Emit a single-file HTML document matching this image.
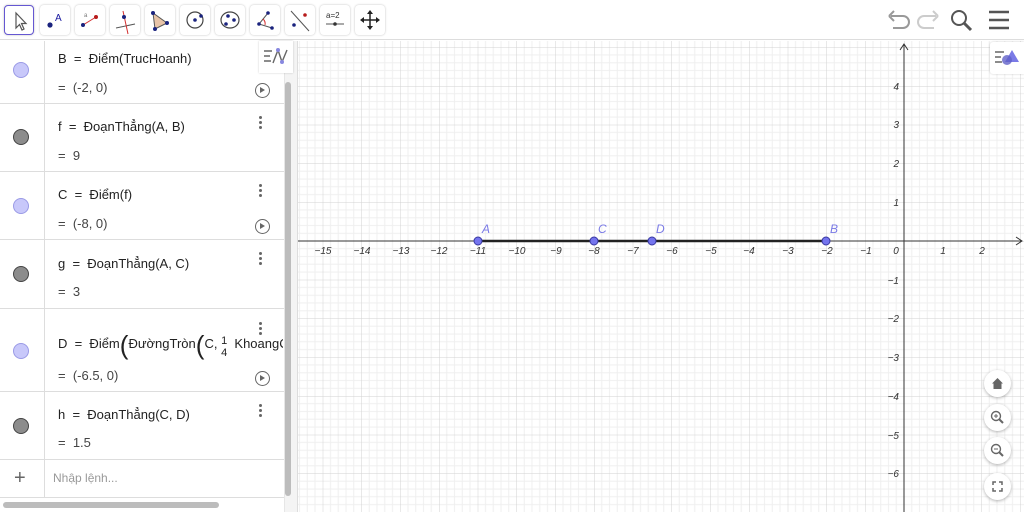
<!DOCTYPE html>
<html><head><meta charset="utf-8"><style>
*{margin:0;padding:0;box-sizing:border-box}
body{width:1024px;height:512px;overflow:hidden;background:#fff;font-family:"Liberation Sans","DejaVu Sans",sans-serif;position:relative;color:#333}
.tb{position:absolute;top:0;left:0;width:1024px;height:40px;background:#fff;border-bottom:1px solid #ddd}
.btn{position:absolute;top:5px;width:30px;height:30px;border-radius:4px;background:#fff;box-shadow:0 0 2px rgba(0,0,0,.25)}
.btn svg{position:absolute;left:0;top:0}
.sel{border:1.5px solid #6557d2}
.alg{position:absolute;left:0;top:41px;width:284px;height:458px;background:#fff}
.row{position:absolute;left:0;width:284px;border-bottom:1px solid #ddd}
.col{position:absolute;left:44px;top:41px;width:1px;height:456px;background:#ddd}
.dot{position:absolute;left:13px;width:16px;height:16px;border-radius:50%}
.pt{background:#c8c8fa;border:1px solid #9a9ae6}
.sg{background:#8c8c8c;border:1px solid #444}
.t{position:absolute;left:58px;font-size:13px;color:#222;white-space:nowrap}
.v{position:absolute;left:58px;font-size:13px;color:#444}
.kb{position:absolute;left:259px;width:3px;height:14px}
.kb i{display:block;width:3px;height:3px;border-radius:50%;background:#666;margin-bottom:2px}
.play{position:absolute;left:255px;width:15px;height:15px;border:1.5px solid #666;border-radius:50%}
.play:after{content:"";position:absolute;left:4px;top:2.5px;border-left:5px solid #666;border-top:3.5px solid transparent;border-bottom:3.5px solid transparent}
.zb{position:absolute;left:984px;width:27px;height:27px;border-radius:50%;background:#fff;box-shadow:0 1px 3px rgba(0,0,0,.3)}
</style></head><body>
<div class="tb">
<div class="btn sel" style="left:4px"><svg width="30" height="30"><path d="M11 7 L11 22 L14.5 18.5 L17 24 L19 23 L16.5 17.5 L21 17.5 Z" fill="#fff" stroke="#555" stroke-width="1.2"/></svg></div>
<div class="btn" style="left:40px"><svg width="30" height="30"><circle cx="10" cy="20" r="2.6" fill="#1a237e"/><text x="15" y="16" font-size="10" fill="#1a1aa0" font-family="Liberation Sans">A</text></svg></div>
<div class="btn" style="left:75px"><svg width="30" height="30"><line x1="8" y1="20" x2="21" y2="12" stroke="#d32f2f" stroke-width="1"/><circle cx="8" cy="20" r="2" fill="#1a237e"/><circle cx="21" cy="12" r="2" fill="#b71c1c"/><text x="9" y="12" font-size="6" fill="#777">a</text></svg></div>
<div class="btn" style="left:110px"><svg width="30" height="30"><line x1="6" y1="23" x2="25" y2="19" stroke="#555"/><line x1="13" y1="6" x2="18" y2="29" stroke="#d32f2f"/><circle cx="14" cy="12" r="2" fill="#1a237e"/></svg></div>
<div class="btn" style="left:145px"><svg width="30" height="30"><path d="M8 8 L10 24 L22 18 Z" fill="#e8c4a8" stroke="#555"/><circle cx="8" cy="8" r="2" fill="#1a237e"/><circle cx="10" cy="24" r="2" fill="#1a237e"/><circle cx="22" cy="18" r="2" fill="#1a237e"/></svg></div>
<div class="btn" style="left:180px"><svg width="30" height="30"><circle cx="15" cy="15" r="8" fill="none" stroke="#444" stroke-width="1.2"/><circle cx="15" cy="15" r="1.8" fill="#1a237e"/><circle cx="21" cy="11" r="1.8" fill="#1a237e"/></svg></div>
<div class="btn" style="left:215px"><svg width="30" height="30"><ellipse cx="15" cy="15" rx="9" ry="8" fill="none" stroke="#444" stroke-width="1.2"/><circle cx="11" cy="19" r="1.8" fill="#1a237e"/><circle cx="13" cy="11" r="1.8" fill="#1a237e"/><circle cx="19" cy="15" r="1.8" fill="#1a237e"/></svg></div>
<div class="btn" style="left:250px"><svg width="30" height="30"><path d="M18 8 L9 19 L22 23" fill="none" stroke="#555"/><path d="M13 14 A6 6 0 0 1 15 20" fill="#f8c0c0" stroke="#d32f2f"/><circle cx="18" cy="8" r="1.8" fill="#1a237e"/><circle cx="9" cy="19" r="1.8" fill="#1a237e"/><circle cx="22" cy="23" r="1.8" fill="#1a237e"/></svg></div>
<div class="btn" style="left:285px"><svg width="30" height="30"><line x1="6" y1="6" x2="24" y2="26" stroke="#555"/><circle cx="20" cy="10" r="1.8" fill="#b71c1c"/><circle cx="9" cy="20" r="1.8" fill="#1a237e"/></svg></div>
<div class="btn" style="left:320px"><svg width="30" height="30"><text x="6" y="13" font-size="8" fill="#333">a=2</text><line x1="6" y1="19" x2="24" y2="19" stroke="#555"/><circle cx="15" cy="19" r="1.8" fill="#333"/></svg></div>
<div class="btn" style="left:355px"><svg width="30" height="30"><path d="M15 7 V23 M7 15 H23" stroke="#222" stroke-width="1.5"/><path d="M15 5 L12 9 H18Z M15 25 L12 21 H18Z M5 15 L9 12 V18Z M25 15 L21 12 V18Z" fill="#222"/></svg></div>
<svg style="position:absolute;left:885px;top:6px" width="139" height="30">
<path d="M6 10 H18 A6 6 0 0 1 18 22 H8" fill="none" stroke="#999" stroke-width="2"/><path d="M4 10 L9 5 M4 10 L9 15" stroke="#999" stroke-width="2" fill="none"/>
<path d="M51 10 H39 A6 6 0 0 0 39 22 H49" fill="none" stroke="#ccc" stroke-width="2"/><path d="M53 10 L48 5 M53 10 L48 15" stroke="#ccc" stroke-width="2" fill="none"/>
<circle cx="74" cy="12" r="7" fill="none" stroke="#555" stroke-width="2"/><line x1="79" y1="17" x2="86" y2="24" stroke="#555" stroke-width="3"/>
<path d="M104 6 H124 M104 14 H124 M104 22 H124" stroke="#555" stroke-width="2.5"/>
</svg>
</div>
<svg style="position:absolute;left:298px;top:41px" width="726" height="471" viewBox="298 41 726 471">
<defs><pattern id="g" x="12.75" y="8.5" width="38.75" height="38.75" patternUnits="userSpaceOnUse">
<path d="M7.75 0V38.75M15.5 0V38.75M23.25 0V38.75M31 0V38.75M0 7.75H38.75M0 15.5H38.75M0 23.25H38.75M0 31H38.75" stroke="#efefef" stroke-width="1"/>
<path d="M0 0V38.75M0 0H38.75" stroke="#d2d2d2" stroke-width="1"/></pattern></defs>
<rect x="298" y="41" width="726" height="471" fill="url(#g)"/>
<line x1="298" y1="241" x2="1022" y2="241" stroke="#333" stroke-width="1"/>
<path d="M1016 237 L1022 241 L1016 245" fill="none" stroke="#333"/>
<line x1="904" y1="44" x2="904" y2="512" stroke="#333" stroke-width="1"/>
<path d="M900 50 L904 44 L908 50" fill="none" stroke="#333"/>
<g font-size="10" font-style="italic" fill="#333" text-anchor="middle" font-family="Liberation Sans">
<text x="323" y="254">−15</text><text x="362" y="254">−14</text><text x="401" y="254">−13</text><text x="439" y="254">−12</text><text x="478" y="254">−11</text><text x="517" y="254">−10</text><text x="556" y="254">−9</text><text x="594" y="254">−8</text><text x="633" y="254">−7</text><text x="672" y="254">−6</text><text x="711" y="254">−5</text><text x="749" y="254">−4</text><text x="788" y="254">−3</text><text x="827" y="254">−2</text><text x="866" y="254">−1</text><text x="896" y="254">0</text><text x="943" y="254">1</text><text x="982" y="254">2</text>
</g>
<g font-size="10" font-style="italic" fill="#333" text-anchor="end" font-family="Liberation Sans">
<text x="899" y="90">4</text><text x="899" y="128">3</text><text x="899" y="167">2</text><text x="899" y="206">1</text><text x="899" y="284">−1</text><text x="899" y="322">−2</text><text x="899" y="361">−3</text><text x="899" y="400">−4</text><text x="899" y="439">−5</text><text x="899" y="477">−6</text>
</g>
<line x1="478" y1="241" x2="826" y2="241" stroke="#222" stroke-width="2.5"/>
<g fill="#7474ee" stroke="#3838a0" stroke-width="1">
<circle cx="478" cy="241" r="4"/><circle cx="594" cy="241" r="4"/><circle cx="652" cy="241" r="4"/><circle cx="826" cy="241" r="4"/></g>
<g font-size="12" font-style="italic" fill="#7a7ae6" font-family="Liberation Sans">
<text x="482" y="233">A</text><text x="598" y="233">C</text><text x="656" y="233">D</text><text x="830" y="233">B</text></g>
</svg>
<div style="position:absolute;left:990px;top:42px;width:34px;height:32px;background:#fff;box-shadow:0 0 2px rgba(0,0,0,.2);border-radius:3px 0 0 3px">
<svg width="34" height="32"><path d="M5 10 H14 M5 15 H11 M5 20 H12" stroke="#666" stroke-width="1.5"/><path d="M22 8 L29 20 H15Z" fill="#7a7ae6"/><circle cx="17" cy="18" r="5" fill="#6060c8" opacity=".8"/></svg></div>
<div class="zb" style="top:370px"><svg width="27" height="27"><path d="M8 13.5 L13.5 8 L19 13.5 H17.5 V19 H9.5 V13.5Z" fill="#666"/></svg></div>
<div class="zb" style="top:404px"><svg width="27" height="27"><circle cx="12" cy="12" r="4.5" fill="none" stroke="#666" stroke-width="1.4"/><path d="M10 12H14M12 10V14" stroke="#666"/><line x1="15" y1="15" x2="19" y2="19" stroke="#666" stroke-width="2"/></svg></div>
<div class="zb" style="top:437px"><svg width="27" height="27"><circle cx="12" cy="12" r="4.5" fill="none" stroke="#666" stroke-width="1.4"/><path d="M10 12H14" stroke="#666"/><line x1="15" y1="15" x2="19" y2="19" stroke="#666" stroke-width="2"/></svg></div>
<div class="zb" style="top:473px"><svg width="27" height="27"><path d="M9 12V9H12M15 9H18V12M18 15V18H15M12 18H9V15" fill="none" stroke="#666" stroke-width="1.5"/></svg></div>

<div class="alg">
</div>
<div style="position:absolute;left:284px;top:41px;width:14px;height:471px;background:#f4f4f4;border-left:1px solid #e6e6e6;border-right:1px solid #ddd"></div>
<div style="position:absolute;left:285px;top:82px;width:6px;height:414px;background:#bcbcbc;border-radius:3px"></div>
<div class="col"></div>
<div class="row" style="top:40px;height:64px"></div>
<div class="row" style="top:104px;height:68px"></div>
<div class="row" style="top:172px;height:68px"></div>
<div class="row" style="top:240px;height:69px"></div>
<div class="row" style="top:309px;height:83px"></div>
<div class="row" style="top:392px;height:68px"></div>
<div class="row" style="top:460px;height:38px"></div>
<div style="position:absolute;left:0;top:498px;width:284px;height:14px;background:#fff"></div>
<div style="position:absolute;left:3px;top:502px;width:216px;height:6px;background:#bcbcbc;border-radius:3px"></div>

<div class="dot pt" style="top:62px"></div>
<div class="t" style="top:51px">B &nbsp;=&nbsp; Điểm(TrucHoanh)</div>
<div class="v" style="top:80px">= &nbsp;(-2, 0)</div>
<div class="play" style="top:83px"></div>
<div style="position:absolute;left:259px;top:41px;width:34px;height:32px;background:#fff;box-shadow:0 0 2px rgba(0,0,0,.2)"><svg width="34" height="32"><path d="M5 10H13M5 15H11M5 20H12" stroke="#666" stroke-width="1.4"/><path d="M14 22 L19 9 L23 21 L28 9" fill="none" stroke="#666" stroke-width="1.4"/><circle cx="19" cy="9" r="2" fill="#8888e0"/><circle cx="23" cy="21" r="2" fill="#8888e0"/></svg></div>

<div class="dot sg" style="top:129px"></div>
<div class="t" style="top:119px">f &nbsp;=&nbsp; ĐoạnThẳng(A, B)</div>
<div class="v" style="top:148px">= &nbsp;9</div>
<div class="kb" style="top:116px"><i></i><i></i><i></i></div>

<div class="dot pt" style="top:198px"></div>
<div class="t" style="top:187px">C &nbsp;=&nbsp; Điểm(f)</div>
<div class="v" style="top:216px">= &nbsp;(-8, 0)</div>
<div class="kb" style="top:184px"><i></i><i></i><i></i></div>
<div class="play" style="top:219px"></div>

<div class="dot sg" style="top:266px"></div>
<div class="t" style="top:256px">g &nbsp;=&nbsp; ĐoạnThẳng(A, C)</div>
<div class="v" style="top:284px">= &nbsp;3</div>
<div class="kb" style="top:252px"><i></i><i></i><i></i></div>

<div class="dot pt" style="top:343px"></div>
<div class="t" style="top:330px;width:225px;overflow:hidden">D &nbsp;=&nbsp; Điểm<span style="font-size:26px;vertical-align:-6px;font-weight:100">(</span>ĐườngTròn<span style="font-size:26px;vertical-align:-6px;font-weight:100">(</span>C, <span style="display:inline-block;text-align:center;font-size:11px;line-height:12px;vertical-align:-8px">1<br>4</span> &nbsp;KhoangC</div>
<div class="v" style="top:368px">= &nbsp;(-6.5, 0)</div>
<div class="kb" style="top:322px"><i></i><i></i><i></i></div>
<div class="play" style="top:371px"></div>

<div class="dot sg" style="top:418px"></div>
<div class="t" style="top:407px">h &nbsp;=&nbsp; ĐoạnThẳng(C, D)</div>
<div class="v" style="top:435px">= &nbsp;1.5</div>
<div class="kb" style="top:404px"><i></i><i></i><i></i></div>

<div style="position:absolute;left:14px;top:467px;font-size:20px;color:#666;font-weight:300">+</div>
<div style="position:absolute;left:53px;top:471px;font-size:12px;color:#999">Nhập lệnh...</div>
</body></html>
